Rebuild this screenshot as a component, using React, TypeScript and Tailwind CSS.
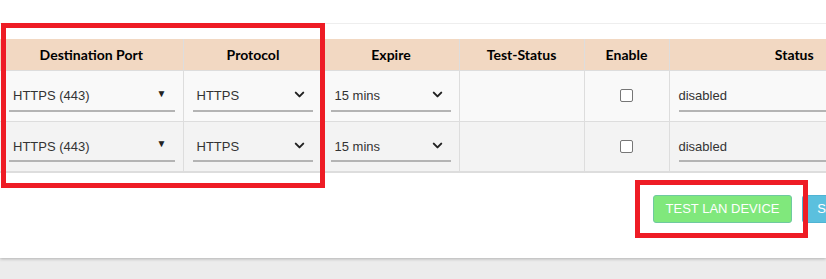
import { ChevronDown } from 'lucide-react'

const ROWS = [
  { port: 'HTTPS (443)', protocol: 'HTTPS', expire: '15 mins', status: 'disabled' },
  { port: 'HTTPS (443)', protocol: 'HTTPS', expire: '15 mins', status: 'disabled' },
]

const HEADERS = [
  { label: 'Destination Port', w: 'w-[183px]' },
  { label: 'Protocol', w: 'w-[140px]' },
  { label: 'Expire', w: 'w-[136px]' },
  { label: 'Test-Status', w: 'w-[125px]' },
  { label: 'Enable', w: 'w-[85px]' },
  { label: 'Status', w: 'w-[250px]' },
]

function FakeSelect({ value, arrow }: { value: string; arrow: 'triangle' | 'chevron' }) {
  return (
    <div className="flex h-[32px] w-full items-center justify-between border-b-2 border-[#b4b4b4] pl-1 pr-[6px] text-[13px] text-[#333]">
      <span className="translate-y-[1px]">{value}</span>
      {arrow === 'triangle' ? (
        <span className="mr-[2px] mt-[-2px] text-[10px] leading-none text-[#222]">▼</span>
      ) : (
        <ChevronDown className="size-[15px] text-[#222]" strokeWidth={3.2} />
      )}
    </div>
  )
}

export default function App() {
  return (
    <div className="relative h-[279px] w-[826px] overflow-hidden bg-[#ececec] font-['Liberation_Sans',Arial,sans-serif]">
      {/* panneau blanc */}
      <div className="h-[258px] bg-white shadow-[0_1px_3px_rgba(0,0,0,0.25)]">
        <div className="h-[24px] border-b border-[#eeeeee]" />

        <div className="w-[919px] pt-[15px]">
          <table className="w-[919px] table-fixed border-collapse">
            <thead>
              <tr className="h-[31px] bg-[#f2d8c2]">
                {HEADERS.map((h, i) => (
                  <th
                    key={h.label}
                    className={`${h.w} border-[#dddddd] font-['Lato',sans-serif] text-[14px] font-bold text-black ${i > 0 ? 'border-l' : ''}`}
                  >
                    {h.label}
                  </th>
                ))}
              </tr>
            </thead>
            <tbody>
              {ROWS.map((r, i) => (
                <tr
                  key={i}
                  className={`h-[51px] border-t border-[#dddddd] ${i === 0 ? 'bg-[#f9f9f9]' : 'border-b-2 bg-[#f3f3f3]'}`}
                >
                  <td className="pl-[9px] pr-2 align-middle">
                    <FakeSelect value={r.port} arrow="triangle" />
                  </td>
                  <td className="border-l border-[#dddddd] pl-[9px] pr-[10px] align-middle">
                    <FakeSelect value={r.protocol} arrow="chevron" />
                  </td>
                  <td className="border-l border-[#dddddd] pl-[7px] pr-2 align-middle">
                    <FakeSelect value={r.expire} arrow="chevron" />
                  </td>
                  <td className="border-l border-[#dddddd]" />
                  <td className="border-l border-[#dddddd] text-center align-middle">
                    <span className="inline-block size-[13px] translate-y-[-1px] rounded-[2px] border border-[#767676] bg-white align-middle" />
                  </td>
                  <td className="border-l border-[#dddddd] pl-[9px] align-middle">
                    <div className="flex h-[32px] items-center border-b-2 border-[#b4b4b4] text-[13px] text-[#333]">
                      <span className="translate-y-[1px]">{r.status}</span>
                    </div>
                  </td>
                </tr>
              ))}
            </tbody>
          </table>

          <div className="flex justify-end gap-[10px] pr-[53px] pt-[22px]">
            <button className="h-[28px] w-[139px] rounded-[3px] border border-[#6fc9a0] bg-[#80e87c] text-[13px] text-white">
              TEST LAN DEVICE
            </button>
            <button className="h-[28px] w-[64px] rounded-[3px] border border-[#4fb3d3] bg-[#5bc0de] text-[13px] text-white">
              SAVE
            </button>
          </div>
        </div>
      </div>

      {/* Annotations rouges */}
      <div className="pointer-events-none absolute left-[1px] top-[23px] h-[165px] w-[324px] border-[5px] border-[#ee1c25]" />
      <div className="pointer-events-none absolute left-[635px] top-[180px] h-[58px] w-[173px] border-[5px] border-[#ee1c25]" />
    </div>
  )
}
